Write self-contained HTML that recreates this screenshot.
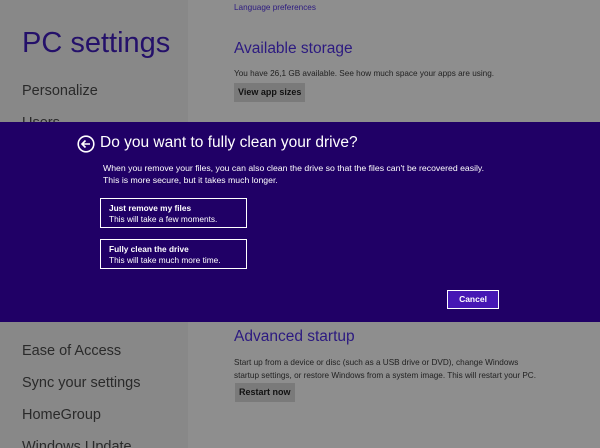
<!DOCTYPE html>
<html><head><meta charset="utf-8"><style>
*{margin:0;padding:0;box-sizing:border-box}
html,body{width:600px;height:448px;overflow:hidden}
body{background:#8e8e8e;font-family:"Liberation Sans",sans-serif;position:relative}
.l{position:absolute;left:0;top:0;width:188px;height:448px;background:#888}
.a{position:absolute;white-space:nowrap}
.nav{font-size:14.5px;color:#2a2a2a;left:22px}
.p{color:#2c1a80}
.small{font-size:8.2px;color:#222}
.btn{position:absolute;background:#7a7a7a;color:#111;font-size:9px;font-weight:bold;padding:0 4px;line-height:19px}
.band{position:absolute;left:0;top:122px;width:600px;height:200px;background:#200066}
.opt{position:absolute;left:100px;width:147px;height:30px;border:1.5px solid #fff;color:#fff;padding:4px 8px}
.opt b{display:block;font-size:8.3px}
.opt span{display:block;font-size:8.3px;margin-top:1px}
</style></head><body>
<div class="l"></div>
<div class="a p" style="left:234px;top:3px;font-size:8.2px">Language preferences</div>
<div class="a p" style="left:22px;top:27px;font-size:29px;color:#24106a">PC settings</div>
<div class="a nav" style="top:83px">Personalize</div>
<div class="a nav" style="top:115px">Users</div>
<div class="a p" style="left:234px;top:40px;font-size:15.5px">Available storage</div>
<div class="a small" style="left:234px;top:69px">You have 26,1 GB available. See how much space your apps are using.</div>
<div class="btn" style="left:234px;top:83px">View app sizes</div>
<div class="band">
<svg style="position:absolute;left:77px;top:13px" width="18" height="18" viewBox="0 0 18 18"><circle cx="9" cy="9" r="7.8" fill="none" stroke="#fff" stroke-width="1.6"/><path d="M13 9H5.5M8.5 5.5L5 9l3.5 3.5" fill="none" stroke="#fff" stroke-width="1.6"/></svg>
<div class="a" style="left:100px;top:12px;font-size:15.5px;color:#fff">Do you want to fully clean your drive?</div>
<div class="a" style="left:103px;top:40px;font-size:8.7px;color:#fff;line-height:12px">When you remove your files, you can also clean the drive so that the files can't be recovered easily.<br>This is more secure, but it takes much longer.</div>
<div class="opt" style="top:76px"><b>Just remove my files</b><span>This will take a few moments.</span></div>
<div class="opt" style="top:117px"><b>Fully clean the drive</b><span>This will take much more time.</span></div>
<div style="position:absolute;left:447px;top:168px;width:52px;height:19px;background:#4617b4;border:1.5px solid #fff;color:#fff;font-size:8.5px;font-weight:bold;text-align:center;line-height:16px">Cancel</div>
</div>
<div class="a p" style="left:234px;top:328px;font-size:15.5px">Advanced startup</div>
<div class="a small" style="left:234px;top:357px;line-height:12.5px">Start up from a device or disc (such as a USB drive or DVD), change Windows<br>startup settings, or restore Windows from a system image. This will restart your PC.</div>
<div class="btn" style="left:235px;top:383px">Restart now</div>
<div class="a nav" style="top:343px">Ease of Access</div>
<div class="a nav" style="top:375px">Sync your settings</div>
<div class="a nav" style="top:407px">HomeGroup</div>
<div class="a nav" style="top:439px">Windows Update</div>
</body></html>
